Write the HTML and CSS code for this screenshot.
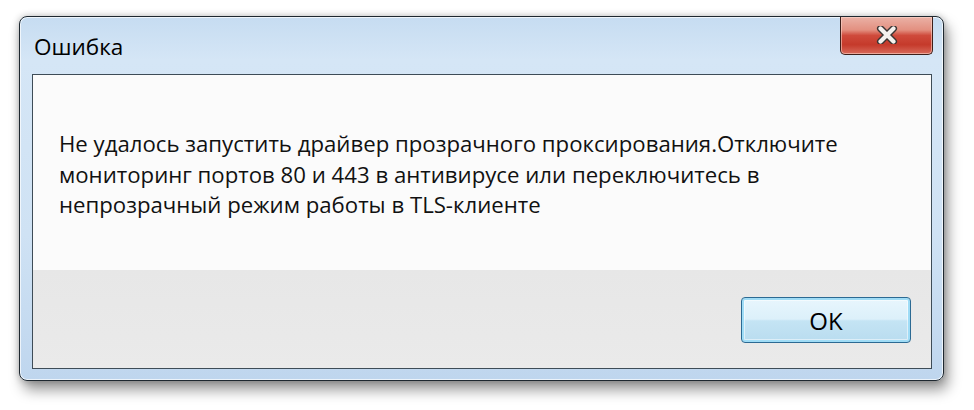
FILE: index.html
```html
<!DOCTYPE html>
<html lang="ru">
<head>
<meta charset="utf-8">
<title>Ошибка</title>
<link rel="stylesheet" href="styles.css">
</head>
<body>
<div class="stage">
  <div class="window">
    <div class="titlebar">
      <span class="title">Ошибка</span>
      <button class="close" aria-label="Закрыть">
        <svg width="22" height="18" viewBox="0 0 22 18">
          <path d="M4.5 2.5 L17.5 15.5 M17.5 2.5 L4.5 15.5" stroke="#3a3433" stroke-width="7" stroke-linecap="round" fill="none"/>
          <path d="M4.5 2.5 L17.5 15.5 M17.5 2.5 L4.5 15.5" stroke="#f4f1ee" stroke-width="4.2" stroke-linecap="round" fill="none"/>
        </svg>
      </button>
    </div>
    <div class="client">
      <div class="content">
        <p class="message">Не удалось запустить драйвер прозрачного проксирования.Отключите<br>мониторинг портов 80 и 443 в антивирусе или переключитесь в<br>непрозрачный режим работы в TLS-клиенте</p>
      </div>
      <div class="footer">
        <button class="ok">OK</button>
      </div>
    </div>
  </div>
</div>
</body>
</html>
```

FILE: styles.css
```css
html, body {
  margin: 0;
  padding: 0;
  background: #ffffff;
}
body {
  width: 974px;
  height: 410px;
  overflow: hidden;
  font-family: "Open Sans", "Noto Sans", "DejaVu Sans", sans-serif;
}
.stage {
  padding: 16px 0 0 19px;
}
.window {
  box-sizing: border-box;
  width: 925px;
  height: 365px;
  border: 1px solid #1e2830;
  border-radius: 8px;
  background: linear-gradient(180deg, #c6dcf1 0%, #d5e6f6 12%, #cfe2f4 60%, #bfd6ee 100%);
  box-shadow: inset 0 0 0 1px rgba(255,255,255,0.7), 4px 9px 14px rgba(0,0,0,0.4), 0 0 7px rgba(0,0,0,0.25);
  padding: 0 11px 11px 12px;
  display: flex;
  flex-direction: column;
}
.titlebar {
  height: 57px;
  display: flex;
  align-items: flex-start;
  justify-content: space-between;
}
.title {
  margin: 17px 0 0 2px;
  font-size: 22.5px;
  color: #000;
  line-height: 26px;
}
.close {
  box-sizing: border-box;
  width: 93px;
  height: 38px;
  margin: 0 -1px 0 0;
  padding: 0;
  border: 1px solid #3d1f1a;
  border-top: none;
  border-radius: 0 0 5px 5px;
  background: linear-gradient(180deg, #eab1a6 0%, #e39080 35%, #cf4a3b 50%, #c53a2b 75%, #d86a5b 100%);
  box-shadow: inset 0 0 0 1px rgba(255,220,210,0.55);
  display: flex;
  align-items: center;
  justify-content: center;
}
.close svg {
  display: block;
  margin-top: -1px;
}
.client {
  flex: 1;
  border: 1px solid #3e4c57;
  display: flex;
  flex-direction: column;
  background: #ebebeb;
}
.content {
  height: 195px;
  background: #fbfbfb;
  box-sizing: border-box;
  padding: 54px 0 0 26px;
}
.message {
  margin: 0;
  font-size: 22.2px;
  line-height: 30.5px;
  color: #111;
}
.footer {
  flex: 1;
  background: linear-gradient(180deg, #e7e7e7 0%, #eaeaea 100%);
  display: flex;
  align-items: flex-start;
  justify-content: flex-end;
  padding: 27px 20px 0 0;
}
.ok {
  box-sizing: border-box;
  width: 170px;
  height: 46px;
  border: 1px solid #2c6a93;
  border-radius: 4px;
  background: linear-gradient(180deg, #e8f6fd 0%, #dcf0fa 48%, #c4e4f4 52%, #b9dcef 100%);
  box-shadow: inset 0 0 0 2px #9fdcf6, inset 0 0 0 3px rgba(255,255,255,0.5);
  font-family: "Open Sans", "Noto Sans", sans-serif;
  font-size: 24px;
  color: #000;
  padding: 0;
}
```
